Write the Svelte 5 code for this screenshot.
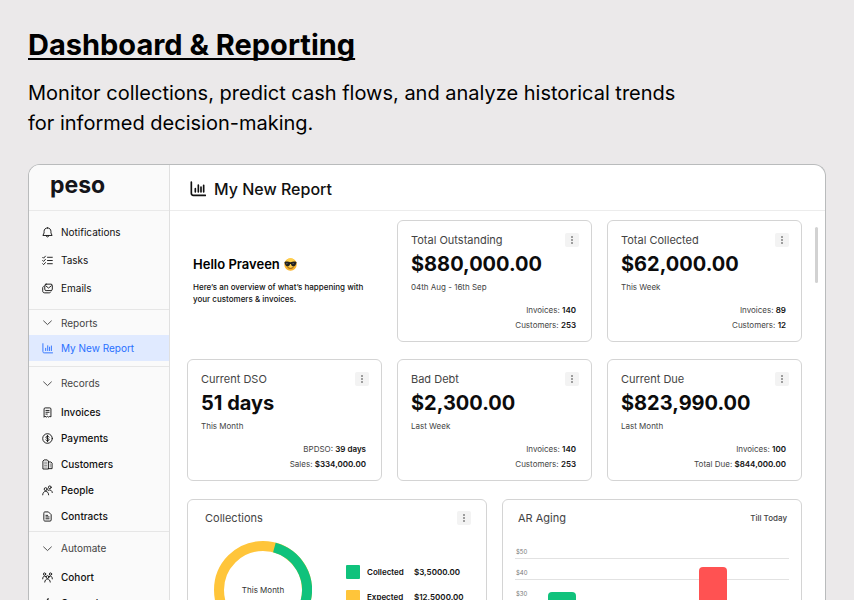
<script lang="ts">
  type Stat = { label: string; value: string };
  type Metric = { title: string; value: string; period: string; stats: Stat[] };

  const mainLinks = [
    { label: 'Notifications', icon: 'bell' },
    { label: 'Tasks', icon: 'tasks' },
    { label: 'Emails', icon: 'mail' }
  ];

  const groups = [
    { title: 'Reports', links: [{ label: 'My New Report', icon: 'chart' }] },
    {
      title: 'Records',
      links: [
        { label: 'Invoices', icon: 'invoice' },
        { label: 'Payments', icon: 'dollar' },
        { label: 'Customers', icon: 'building' },
        { label: 'People', icon: 'people' },
        { label: 'Contracts', icon: 'file' }
      ]
    },
    {
      title: 'Automate',
      links: [
        { label: 'Cohort', icon: 'cohort' },
        { label: 'General', icon: 'spark' }
      ]
    }
  ];

  const metrics: Metric[] = [
    {
      title: 'Total Outstanding',
      value: '$880,000.00',
      period: '04th Aug - 16th Sep',
      stats: [{ label: 'Invoices', value: '140' }, { label: 'Customers', value: '253' }]
    },
    {
      title: 'Total Collected',
      value: '$62,000.00',
      period: 'This Week',
      stats: [{ label: 'Invoices', value: '89' }, { label: 'Customers', value: '12' }]
    },
    {
      title: 'Current DSO',
      value: '51 days',
      period: 'This Month',
      stats: [{ label: 'BPDSO', value: '39 days' }, { label: 'Sales', value: '$334,000.00' }]
    },
    {
      title: 'Bad Debt',
      value: '$2,300.00',
      period: 'Last Week',
      stats: [{ label: 'Invoices', value: '140' }, { label: 'Customers', value: '253' }]
    },
    {
      title: 'Current Due',
      value: '$823,990.00',
      period: 'Last Month',
      stats: [{ label: 'Invoices', value: '100' }, { label: 'Total Due', value: '$844,000.00' }]
    }
  ];

  const collections = [
    { label: 'Collected', value: '$3,5000.00', tone: 'green' },
    { label: 'Expected', value: '$12,5000.00', tone: 'yellow' }
  ];

  const ticks = ['$50', '$40', '$30', '$20'];

  const bars = [
    { left: 12, height: 30, tone: 'green' },
    { left: 67, height: 55, tone: 'red' }
  ];

  let active = $state('My New Report');
  let closed = $state<string[]>([]);

  function toggleGroup(title: string) {
    if (closed.includes(title)) {
      closed = closed.filter((t) => t !== title);
    } else {
      closed.push(title);
    }
  }
</script>

{#snippet icon(name: string)}
  <svg class="icon" viewBox="0 0 24 24" aria-hidden="true">
    {#if name === 'bell'}
      <path d="M12 2c-4.500 0-7.500 3-7.500 7.500V13L2 18.500h20L19.500 13V9.500C19.500 5 16.500 2 12 2z" />
      <path d="M9 19c.4 1.800 1.500 2.700 3 2.700s2.600-.9 3-2.700" />
    {:else if name === 'tasks'}
      <path d="M1.500 5l2 2 4-4.500M1.500 12l2 2 4-4.500M1.500 19l2 2 4-4.500M12 5h10.500M12 12h10.500M12 19h10.500" />
    {:else if name === 'mail'}
      <rect x="6" y="2.500" width="16.500" height="14" rx="3" />
      <path d="M8 6l6.200 5 6.300-5M3 7.500c-1.300.8-1.500 2-1.500 3.500v6c0 3 1.500 4.500 4.500 4.500h9c2 0 3.200-.5 4-1.800" />
    {:else if name === 'chart'}
      <path d="M2 1.500v17c0 2 .8 3 3 3h18M8 11.500v5M12.500 6v10.500M16.500 9v7.500M20.500 6.500v10" />
    {:else if name === 'invoice'}
      <path d="M4.500 21.500v-17C4.500 2.800 5.300 2 7 2h10c1.700 0 2.500.8 2.500 2.500v17L17 20.500l-2.500 1.500-2.500-1.500L9.500 22 7 20.500z" />
      <path d="M8.500 7.500h7M8.500 11.500h7M8.500 15.500h3" />
    {:else if name === 'dollar'}
      <circle cx="12" cy="12" r="10.500" />
      <path d="M15.500 9c-.5-1.300-1.800-2-3.500-2-2 0-3.500.9-3.500 2.500 0 3.500 7 1.500 7 5 0 1.600-1.500 2.500-3.500 2.500-1.700 0-3-.7-3.500-2M12 5v14" />
    {:else if name === 'building'}
      <path d="M2 21V4.500L4.500 2h7L14 4.500V21zM14 6.500h5.500L22 9v12h-8" />
      <path class="thin" d="M5.500 7h5M5.500 10.500h5M5.500 14h5M5.500 17.500h5M18 10.500v7" />
    {:else if name === 'people'}
      <circle cx="8" cy="9" r="3.200" />
      <circle cx="17" cy="5" r="3" />
      <path d="M1.500 21.500c.3-5 2.800-7.500 6.500-7.500s6.200 2.500 6.500 7.500M13.500 11.500c4.500-2 8.500 0 9 5" />
    {:else if name === 'file'}
      <path d="M4 4.500C4 2.800 4.800 2 6.500 2H14l6 6v11.500c0 1.700-.8 2.500-2.500 2.500h-11C4.800 22 4 21.200 4 19.500z" />
      <path d="M8.500 9.500h4M8.500 13h7M8.500 17h7" />
    {:else if name === 'cohort'}
      <circle cx="5.500" cy="4.500" r="2.500" />
      <circle cx="18.500" cy="4.500" r="2.500" />
      <circle cx="12" cy="11" r="3" />
      <path d="M1.500 15c0-3.500 1.500-6 4-6l3 1M22.500 15c0-3.500-1.500-6-4-6l-3 1M6 22c.3-4 2.500-6.500 6-6.500s5.700 2.500 6 6.500" />
    {:else}
      <path d="M13 1.500L5 13h6l-1 9.500L19 10h-6z" />
    {/if}
  </svg>
{/snippet}

{#snippet menuButton(title: string)}
  <button class="kebab" type="button" aria-label="{title} options">
    <svg viewBox="0 0 14 14" aria-hidden="true">
      <circle cx="7" cy="4" r="0.800" />
      <circle cx="7" cy="7" r="0.800" />
      <circle cx="7" cy="10" r="0.800" />
    </svg>
  </button>
{/snippet}

<div class="page">
  <header class="intro">
    <h1>Dashboard &amp; Reporting</h1>
    <p>Monitor collections, predict cash flows, and analyze historical trends<br />for informed decision-making.</p>
  </header>

  <div class="window">
    <aside class="sidebar">
      <div class="brand">peso</div>
      <nav>
        <div class="main-links">
          {#each mainLinks as link}
            <a class="link" href="#{link.icon}">{@render icon(link.icon)}{link.label}</a>
          {/each}
        </div>
        {#each groups as group}
          <section class="group" class:reports={group.title === 'Reports'}>
            <button class="group-title" type="button" onclick={() => toggleGroup(group.title)}>
              <svg class="icon" viewBox="0 0 24 24" aria-hidden="true"><path d="M3.500 8.500l8.500 8 8.500-8" /></svg>
              {group.title}
            </button>
            {#if !closed.includes(group.title)}
              {#each group.links as link}
                <a
                  class="link"
                  class:active={active === link.label}
                  href="#{link.icon}"
                  onclick={() => (active = link.label)}
                >
                  {@render icon(link.icon)}{link.label}
                </a>
              {/each}
            {/if}
          </section>
        {/each}
      </nav>
    </aside>

    <main class="content">
      <div class="topbar">
        {@render icon('chart')}
        <h2>My New Report</h2>
      </div>

      <div class="board">
        <div class="metrics">
          <div class="hello">
            <h3>
              Hello Praveen
              <svg class="emoji" viewBox="0 0 24 24" role="img" aria-label="smiling face with sunglasses">
                <circle cx="12" cy="12" r="11.500" fill="#fbb52d" />
                <circle cx="12" cy="9.500" r="9" fill="#ffd04a" />
                <path d="M1 7.500c3.500-1.300 7-1 11 .2 4-1.200 7.500-1.500 11-.2v2.300c-.8.500-.9 1.200-1.200 2.400-.6 2.300-2 3.300-4.300 3.300-2.700 0-4-1.600-4.700-4.500h-1.600c-.7 2.900-2 4.500-4.700 4.500-2.300 0-3.700-1-4.300-3.300C1.900 11 1.800 10.300 1 9.800z" fill="#23211f" />
                <path d="M4 9.500l3-.5-2 3zM15.500 9.500l3-.5-2 3z" fill="#777" />
                <path d="M7 17.500c3 2.300 7 2.300 10 0" fill="none" stroke="#7a4310" stroke-width="1.500" stroke-linecap="round" />
              </svg>
            </h3>
            <p>Here’s an overview of what’s happening with your customers &amp; invoices.</p>
          </div>

          {#each metrics as metric}
            <article class="card metric">
              <div class="card-head">
                <h4>{metric.title}</h4>
                {@render menuButton(metric.title)}
              </div>
              <div class="value">{metric.value}</div>
              <div class="period">{metric.period}</div>
              <ul class="stats">
                {#each metric.stats as stat}
                  <li>{stat.label}: <strong>{stat.value}</strong></li>
                {/each}
              </ul>
            </article>
          {/each}
        </div>

        <div class="charts">
          <article class="card collections">
            <div class="card-head">
              <h4>Collections</h4>
              {@render menuButton('Collections')}
            </div>
            <div class="collections-body">
              <div class="donut">
                <svg viewBox="0 0 98 98" aria-hidden="true">
                  <circle class="ring yellow" cx="49" cy="49" r="44" />
                  <circle class="ring green" cx="49" cy="49" r="44" pathLength="100" stroke-dasharray="36 64" transform="rotate(-75 49 49)" />
                </svg>
                <span>This Month</span>
              </div>
              <ul class="legend">
                {#each collections as row}
                  <li>
                    <span class="swatch {row.tone}"></span>
                    <span class="name">{row.label}</span>
                    <span>{row.value}</span>
                  </li>
                {/each}
              </ul>
            </div>
          </article>

          <article class="card aging">
            <div class="card-head">
              <h4>AR Aging</h4>
              <span class="range">Till Today</span>
            </div>
            <div class="plot">
              {#each ticks as tick}
                <div class="tick">{tick}</div>
              {/each}
              {#each bars as bar}
                <div class="bar {bar.tone}" style="left: {bar.left}%; height: {bar.height}px"></div>
              {/each}
            </div>
          </article>
        </div>
        <div class="scroll-thumb"></div>
      </div>
    </main>
  </div>
</div>

<style>
  :global(body) {
    background: #ebe9ea;
  }

  .page {
    box-sizing: border-box;
    display: flex;
    flex-direction: column;
    height: 100vh;
    padding: 28px 28px 0;
    overflow: hidden;
    font-family: Inter, 'Liberation Sans', sans-serif;
    color: #111;
  }

  h1, h2, h3, h4, p, ul {
    margin: 0;
    padding: 0;
    list-style: none;
  }

  button {
    border: 0;
    padding: 0;
    font: inherit;
    cursor: pointer;
  }

  .intro {
    flex: none;
    height: 136px;
    color: #000;
  }

  .intro h1 {
    font-size: 29px;
    font-weight: 700;
    line-height: 34px;
    text-decoration: underline;
    text-decoration-thickness: 2px;
    text-underline-offset: 3px;
    text-decoration-skip-ink: none;
  }

  .intro p {
    margin-top: 16px;
    font-size: 20px;
    line-height: 30px;
  }

  .window {
    flex: 1;
    min-height: 0;
    display: flex;
    overflow: hidden;
    border: 1px solid #b9bbbc;
    border-bottom: 0;
    border-radius: 12px 12px 0 0;
    background: #fff;
  }

  .icon {
    flex: none;
    width: 11px;
    height: 11px;
    fill: none;
    stroke: currentColor;
    stroke-width: 2;
    stroke-linecap: round;
    stroke-linejoin: round;
  }

  .icon .thin {
    stroke-width: 1;
  }

  .sidebar {
    flex: none;
    width: 140px;
    border-right: 1px solid #e0e0e0;
    background: #fafafa;
  }

  .brand {
    box-sizing: border-box;
    height: 46px;
    padding-left: 21px;
    border-bottom: 1px solid #e9e9e9;
    font-size: 23px;
    font-weight: 700;
    line-height: 41px;
    color: #15151a;
  }

  .main-links {
    padding: 7px 0;
  }

  .link,
  .group-title {
    box-sizing: border-box;
    display: flex;
    align-items: center;
    gap: 8px;
    width: 100%;
    height: 26px;
    padding-left: 13px;
    font-size: 10px;
    font-weight: 500;
    color: #111;
    text-decoration: none;
  }

  .main-links .link {
    height: 28px;
    font-weight: 400;
  }

  .link.active {
    background: #e0eaff;
    color: #2970ff;
    font-weight: 400;
  }

  .group {
    padding-bottom: 2px;
    border-top: 1px solid #e6e6e6;
  }

  .group-title {
    height: 32px;
    background: none;
    color: #444;
    font-weight: 400;
  }

  .reports {
    padding-bottom: 5px;
  }

  .reports .group-title {
    height: 25px;
  }

  .content {
    flex: 1;
    min-width: 0;
  }

  .topbar {
    box-sizing: border-box;
    display: flex;
    align-items: center;
    gap: 8px;
    height: 46px;
    padding: 2px 0 0 20px;
    border-bottom: 1px solid #ececec;
  }

  .topbar .icon {
    width: 16px;
    height: 16px;
    stroke-width: 2.500;
  }

  .topbar h2 {
    font-size: 16px;
    font-weight: 500;
  }

  .board {
    position: relative;
    padding: 9px 23px 20px 17px;
  }

  .metrics {
    display: grid;
    grid-template-columns: repeat(3, 1fr);
    gap: 17px 15px;
  }

  .hello {
    padding: 36px 6px 0;
  }

  .hello h3 {
    display: flex;
    align-items: center;
    gap: 4px;
    font-size: 13px;
    font-weight: 600;
    line-height: 16px;
    color: #000;
  }

  .emoji {
    width: 13px;
    height: 13px;
  }

  .hello p {
    margin-top: 9px;
    font-size: 8px;
    font-weight: 500;
    line-height: 12px;
  }

  .card {
    box-sizing: border-box;
    border: 1px solid #d4d4d4;
    border-radius: 6px;
    background: #fff;
  }

  .card-head {
    display: flex;
    align-items: center;
    justify-content: space-between;
  }

  .card-head h4 {
    font-size: 11px;
    font-weight: 400;
    line-height: 14px;
    color: #444;
  }

  .kebab {
    display: block;
    width: 14px;
    height: 14px;
    border-radius: 2px;
    background: #f3f3f3;
  }

  .kebab svg {
    display: block;
    fill: #333;
  }

  .metric {
    padding: 12px 12px 8px 13px;
  }

  .value {
    margin-top: 4px;
    font-size: 20px;
    font-weight: 700;
    line-height: 27px;
    color: #0c0c0c;
  }

  .period {
    margin-top: 3px;
    font-size: 8px;
    line-height: 12px;
    color: #444;
  }

  .stats {
    margin-top: 10px;
    padding-right: 3px;
    font-size: 8px;
    line-height: 15px;
    text-align: right;
    color: #444;
  }

  .stats strong {
    font-weight: 600;
    color: #111;
  }

  .charts {
    display: grid;
    grid-template-columns: 1fr 1fr;
    gap: 15px;
    margin-top: 18px;
  }

  .collections {
    padding: 11px 15px 14px 17px;
  }

  .collections-body {
    display: flex;
    gap: 34px;
    padding: 16px 0 0 9px;
  }

  .donut {
    position: relative;
    flex: none;
    width: 98px;
    height: 98px;
  }

  .donut span {
    position: absolute;
    inset: 0;
    display: grid;
    place-items: center;
    font-size: 8px;
    color: #333;
  }

  .ring {
    fill: none;
    stroke-width: 10;
  }

  .ring.yellow {
    stroke: #ffc53a;
  }

  .ring.green {
    stroke: #10c27c;
  }

  .legend {
    display: grid;
    align-content: start;
    gap: 11px;
    padding-top: 24px;
    font-size: 8px;
    font-weight: 600;
  }

  .legend li {
    display: flex;
    align-items: center;
    gap: 7px;
  }

  .legend .name {
    width: 40px;
  }

  .swatch {
    width: 14px;
    height: 14px;
    border-radius: 1px;
  }

  .swatch.green,
  .bar.green {
    background: #10c27c;
  }

  .swatch.yellow {
    background: #ffc53a;
  }

  .bar.red {
    background: #ff5252;
  }

  .aging {
    padding: 11px 12px 14px;
  }

  .aging .card-head {
    padding: 0 2px 0 3px;
  }

  .range {
    font-size: 8px;
    font-weight: 500;
    color: #444;
  }

  .plot {
    position: relative;
    padding-top: 13px;
  }

  .tick {
    box-sizing: border-box;
    height: 21px;
    padding-left: 1px;
    border-bottom: 1px solid #e2e2e2;
    font-size: 6px;
    line-height: 27px;
    color: #777;
  }

  .bar {
    position: absolute;
    bottom: 0;
    width: 28px;
    border-radius: 4px 4px 0 0;
  }

  .scroll-thumb {
    position: absolute;
    top: 16px;
    right: 7px;
    width: 3px;
    height: 56px;
    border-radius: 2px;
    background: #d2d2d2;
  }
</style>
